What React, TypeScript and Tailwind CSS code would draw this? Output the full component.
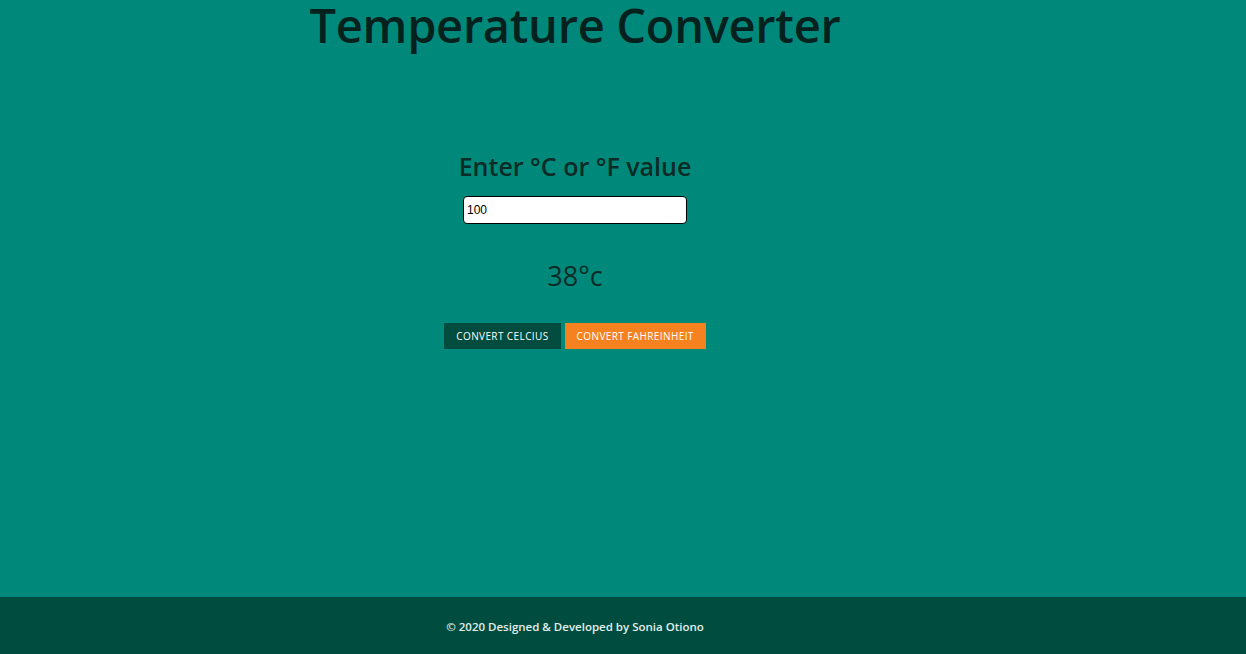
import React, { useState } from 'react';

export default function App() {
  const [value, setValue] = useState('100');
  const [result, setResult] = useState('38°c');

  const toCelcius = () => {
    const n = parseFloat(value);
    if (!isNaN(n)) setResult(Math.round(((n - 32) * 5) / 9) + '°c');
  };
  const toFahrenheit = () => {
    const n = parseFloat(value);
    if (!isNaN(n)) setResult(Math.round((n * 9) / 5 + 32) + '°f');
  };

  return (
    <div className="min-h-[654px] flex flex-col bg-[#00897b] font-['Open_Sans',sans-serif]">
      <main className="flex-1 w-[1150px] flex flex-col items-center">
        <h1 className="text-[47px] leading-[50px] font-semibold text-[#04211d] tracking-[-0.3px]">Temperature Converter</h1>

        <h3 className="mt-[100px] text-[25px] leading-[32px] font-semibold text-[#0b2b27]">Enter °C or °F value</h3>
        <input
          value={value}
          onChange={(e) => setValue(e.target.value)}
          className="mt-[14px] w-[224px] h-[28px] bg-white border border-black rounded-[4px] px-[3px] text-[12px] text-black font-['Liberation_Sans',sans-serif] outline-none"
        />

        <p className="mt-[35px] text-[27px] leading-[34px] font-medium text-[#0b2b27]">{result}</p>

        <div className="mt-[30px] flex gap-[4px]">
          <button
            onClick={toCelcius}
            className="h-[26px] px-[12px] bg-[#004d40] text-white text-[10px] uppercase tracking-[0.4px]"
          >
            Convert Celcius
          </button>
          <button
            onClick={toFahrenheit}
            className="h-[26px] px-[12px] bg-[#f5821f] text-white text-[10px] uppercase tracking-[0.4px]"
          >
            Convert Fahreinheit
          </button>
        </div>
      </main>

      <footer className="h-[57px] bg-[#004d40] flex items-center">
        <div className="w-[1150px] flex justify-center pt-[3px]">
          <p className="text-[11.5px] font-semibold text-[#e3eeeb]">© 2020 Designed &amp; Developed by Sonia Otiono</p>
        </div>
      </footer>
    </div>
  );
}
